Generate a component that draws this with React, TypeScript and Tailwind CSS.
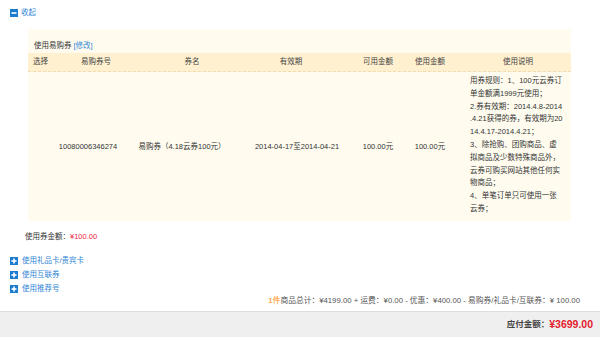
import React from "react";

const font = { fontFamily: '"Liberation Sans", "Noto Sans CJK SC", sans-serif' };

function Icon({ plus }: { plus?: boolean }) {
  return (
    <svg width="8" height="8" viewBox="0 0 8 8" className="shrink-0">
      <rect x="0" y="0" width="8" height="8" fill="#1b7cd0" />
      <rect x="1.5" y="3.2" width="5" height="1.6" fill="#fff" />
      {plus && <rect x="3.2" y="1.5" width="1.6" height="5" fill="#fff" />}
    </svg>
  );
}

const desc = [
  "用券规则：1、100元云券订",
  "单金额满1999元使用；",
  "2.券有效期：2014.4.8-2014",
  ".4.21获得的券，有效期为20",
  "14.4.17-2014.4.21；",
  "3、除抢购、团购商品、虚",
  "拟商品及少数特殊商品外，",
  "云券可购买网站其他任何实",
  "物商品；",
  "4、单笔订单只可使用一张",
  "云券；",
];

export default function App() {
  return (
    <div
      className="w-[600px] h-[337px] overflow-hidden bg-white text-[7.5px] text-[#333] flex flex-col"
      style={font}
    >
      <div className="mt-[9px] h-[8px] pl-[10px] flex items-center gap-[3px]">
        <Icon />
        <span className="text-[#2f86d6] leading-none">收起</span>
      </div>

      <div className="mt-[12px] ml-[28px] w-[543px] bg-[#fffcef] flex flex-col">
        <div className="h-[24px] pt-[10px] pl-[6px] flex items-center">
          <span>使用易购券</span>
          <span className="ml-[2px] text-[#2f86d6]">[修改]</span>
        </div>
        <div className="h-[19px] bg-[#fff0cf] border-b border-dashed border-[#f1dcb4] grid grid-cols-[24px_80px_110px_104px_64px_40px_1fr] items-center text-[#444]">
          <div className="text-center pl-[1px]">选择</div>
          <div className="text-center pl-[8px]">易购券号</div>
          <div className="text-center pl-[10px]">券名</div>
          <div className="text-center pr-[6px]">有效期</div>
          <div className="text-center">可用金额</div>
          <div className="text-center whitespace-nowrap">使用金额</div>
          <div className="text-center pl-[15px]">使用说明</div>
        </div>
        <div className="grid grid-cols-[24px_80px_110px_104px_64px_40px_1fr] items-center">
          <div />
          <div className="text-center pr-[8px] whitespace-nowrap">10080006346274</div>
          <div className="text-center pr-[10px] whitespace-nowrap">易购券（4.18云券100元）</div>
          <div className="text-center pl-[6px] whitespace-nowrap">2014-04-17至2014-04-21</div>
          <div className="text-center whitespace-nowrap">100.00元</div>
          <div className="text-center whitespace-nowrap">100.00元</div>
          <div className="pl-[20px] pt-[3px] pb-[5px] leading-[12.8px] whitespace-nowrap">
            {desc.map((l, i) => (
              <div key={i}>{l}</div>
            ))}
          </div>
        </div>
      </div>

      <div className="mt-[11px] h-[10px] pl-[25px] flex items-center">
        <span>使用券金额：</span>
        <span className="text-[#f0243c]">¥100.00</span>
      </div>

      <div className="mt-[12px] flex flex-col">
        {["使用礼品卡/贵宾卡", "使用互联券", "使用推荐号"].map((t) => (
          <div key={t} className="h-[14px] pl-[10px] flex items-center gap-[4px]">
            <Icon plus />
            <span className="text-[#2f86d6]">{t}</span>
          </div>
        ))}
      </div>

      <div className="h-[10px] pr-[20px] flex items-center justify-end text-[#555] text-[7.75px]">
        <span className="text-[#ff8a00]">1件</span>
        <span>商品总计：¥4199.00 + 运费：¥0.00 - 优惠：¥400.00 - 易购券/礼品卡/互联券：¥ 100.00</span>
      </div>

      <div className="mt-[5px] flex-1 bg-[#efefef] border-t border-[#dedede] flex items-center justify-end pr-[7px]">
        <span className="text-[8.5px] font-bold text-[#444]">应付金额：</span>
        <span className="text-[10.5px] font-bold text-[#e3202e]">¥3699.00</span>
      </div>
    </div>
  );
}
